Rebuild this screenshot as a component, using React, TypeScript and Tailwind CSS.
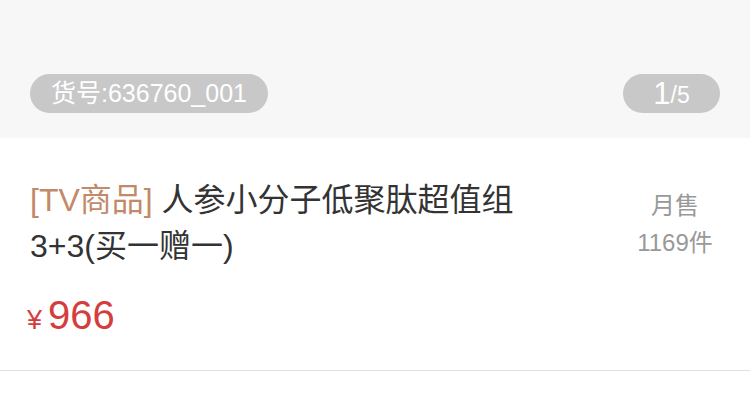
import React from "react";

const font = { fontFamily: '"Liberation Sans", "Noto Sans CJK SC", sans-serif' };

export default function App() {
  return (
    <div className="w-[750px] h-[400px] bg-white overflow-hidden" style={font}>
      {/* gallery bottom strip */}
      <div className="h-[138px] bg-[#f7f7f7] flex items-start justify-between px-[30px] pt-[74px]">
        <div className="h-[39px] rounded-full bg-[#c8c8c8] px-[21px] flex items-center text-white text-[25px] leading-none">
          货号:636760_001
        </div>
        <div className="h-[39px] w-[97px] rounded-full bg-[#c8c8c8] flex items-center justify-center text-white leading-none">
          <span className="text-[31px]">1</span>
          <span className="text-[23px] mt-[4px]">/5</span>
        </div>
      </div>

      {/* product info */}
      <div className="border-b border-[#e0e0e0] px-[30px] pt-[39px] pb-[27px] flex items-start justify-between">
        <div className="flex flex-col">
          <div className="w-[540px] text-[32px] leading-[46px] text-[#333333]">
            <span className="text-[#c28a69]">[TV商品] </span>人参小分子低聚肽超值组3+3(买一赠一)
          </div>
          <div className="mt-[23px] flex items-baseline text-[#d43d3d] leading-[46px] -ml-[3px]">
            <span className="text-[27px] mr-[6px]">¥</span>
            <span className="text-[40px]">966</span>
          </div>
        </div>
        <div className="w-[90px] mt-[10px] text-center text-[24px] leading-[37px] text-[#999999]">
          <div>月售</div>
          <div>1169件</div>
        </div>
      </div>
    </div>
  );
}
